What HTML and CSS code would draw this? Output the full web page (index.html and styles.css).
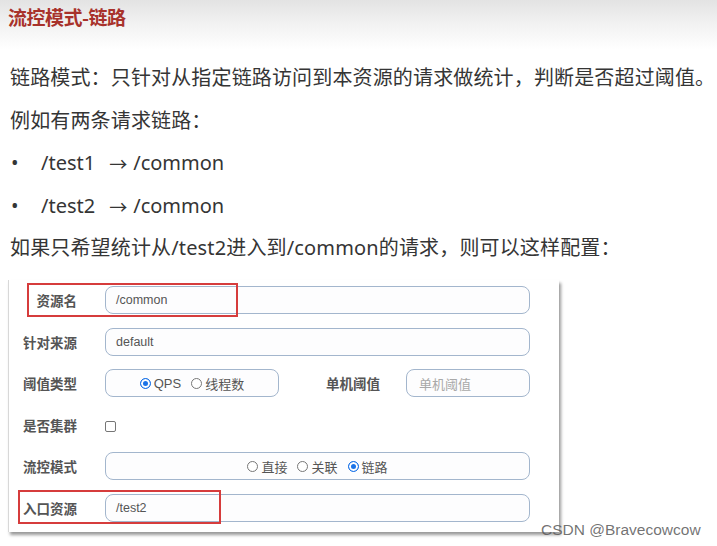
FILE: index.html
```html
<!DOCTYPE html>
<html lang="zh-CN">
<head>
<meta charset="utf-8">
<title>流控模式-链路</title>
<link rel="stylesheet" href="styles.css">
</head>
<body>
<header class="header">
  <h1 class="title">流控模式-链路</h1>
</header>
<main class="content">
  <p class="line">链路模式：只针对从指定链路访问到本资源的请求做统计，判断是否超过阈值。</p>
  <p class="line">例如有两条请求链路：</p>
  <p class="line bullet-line"><span class="bullet">•</span><span>/test1</span><span class="arrow">→</span><span>/common</span></p>
  <p class="line bullet-line"><span class="bullet">•</span><span>/test2</span><span class="arrow">→</span><span>/common</span></p>
  <p class="line">如果只希望统计从/test2进入到/common的请求，则可以这样配置：</p>

  <section class="card">
    <div class="row">
      <span class="label">资源名</span>
      <div class="input wide"><span class="value">/common</span></div>
      <span class="mark mark-1"></span>
    </div>
    <div class="row">
      <span class="label">针对来源</span>
      <div class="input wide"><span class="value">default</span></div>
    </div>
    <div class="row">
      <span class="label">阈值类型</span>
      <div class="input radios narrow">
        <span class="opt"><span class="radio on"></span>QPS</span>
        <span class="opt"><span class="radio"></span>线程数</span>
      </div>
      <span class="label label-2">单机阈值</span>
      <div class="input small"><span class="placeholder">单机阈值</span></div>
    </div>
    <div class="row">
      <span class="label">是否集群</span>
      <span class="checkbox"></span>
    </div>
    <div class="row">
      <span class="label">流控模式</span>
      <div class="input radios wide">
        <span class="opt"><span class="radio"></span>直接</span>
        <span class="opt"><span class="radio"></span>关联</span>
        <span class="opt"><span class="radio on"></span>链路</span>
      </div>
    </div>
    <div class="row">
      <span class="label">入口资源</span>
      <div class="input wide"><span class="value">/test2</span></div>
      <span class="mark mark-2"></span>
    </div>
  </section>
</main>
<div class="watermark">CSDN @Bravecowcow</div>
</body>
</html>
```

FILE: styles.css
```css
html, body {
  margin: 0;
  padding: 0;
  background: #ffffff;
}
body {
  width: 717px;
  height: 546px;
  position: relative;
  overflow: hidden;
  font-family: "Noto Sans", "Noto Sans CJK SC", sans-serif;
}
.header {
  height: 50px;
  background: linear-gradient(to bottom, #e3e3e3 0%, #f1f1f1 45%, #ffffff 100%);
}
.title {
  margin: 0;
  padding: 0 0 0 8px;
  height: 33px;
  font-family: "Noto Sans CJK SC", sans-serif;
  font-weight: 700;
  font-size: 19px;
  letter-spacing: -0.5px;
  line-height: 33px;
  color: #a8322b;
  white-space: nowrap;
}
.content {
  padding: 7px 0 0 10px;
}
.line {
  margin: 0;
  font-size: 20px;
  line-height: 42.5px;
  height: 42.5px;
  color: #353535;
  letter-spacing: 0.15px;
  white-space: nowrap;
  font-family: "Noto Sans", "Noto Sans CJK SC", sans-serif;
}
.bullet-line {
  display: flex;
  align-items: center;
  letter-spacing: 0;
}
.bullet {
  width: 30px;
  padding-left: 1px;
  font-size: 20px;
}
.arrow {
  font-family: "Noto Sans CJK SC", sans-serif;
  margin: 0 6px 0 14px;
  font-size: 18px;
}
.card {
  margin: 10.5px 0 0 -2px;
  width: 522px;
  padding: 6px 28px 10.5px 0;
  background: #ffffff;
  border-left: 1px solid #d8d8d8;
  box-shadow: 2px 3px 3px rgba(0, 0, 0, 0.4);
  display: flex;
  flex-direction: column;
  gap: 13.5px;
  font-family: "Liberation Sans", "Noto Sans CJK SC", sans-serif;
}
.row {
  position: relative;
  display: flex;
  align-items: center;
  height: 28px;
}
.label {
  width: 68px;
  flex: none;
  text-align: right;
  font-weight: 700;
  font-size: 13.5px;
  color: #555555;
  margin-right: 28px;
  font-family: "Noto Sans CJK SC", sans-serif;
}
.label-2 {
  width: 101px;
  margin-right: 26px;
}
.input {
  box-sizing: border-box;
  height: 28px;
  border: 1px solid #a3b6cd;
  border-radius: 8px;
  background: #fdfdfe;
  display: flex;
  align-items: center;
  padding-left: 10px;
  font-size: 12.5px;
  color: #555555;
}
.wide { width: 425px; }
.narrow { width: 174px; }
.small { width: 124px; padding-left: 12px; }
.placeholder {
  color: #a9a9a9;
  font-size: 13px;
  font-family: "Noto Sans CJK SC", sans-serif;
}
.radios {
  justify-content: center;
  padding-left: 0;
  gap: 10px;
}
.opt {
  display: flex;
  align-items: center;
  gap: 3px;
  font-size: 13px;
  color: #555555;
  font-family: "Liberation Sans", "Noto Sans CJK SC", sans-serif;
}
.radio {
  box-sizing: border-box;
  width: 11px;
  height: 11px;
  border-radius: 50%;
  border: 1px solid #777777;
  background: #ffffff;
}
.radio.on {
  border-color: #1a73e8;
  background: #1a73e8;
  box-shadow: inset 0 0 0 2px #ffffff;
}
.checkbox {
  box-sizing: border-box;
  width: 11px;
  height: 11px;
  border: 1px solid #767676;
  border-radius: 2px;
  background: #ffffff;
  margin-top: 4px;
}
.mark {
  position: absolute;
  border: 2px solid #d63c3c;
  box-sizing: border-box;
  pointer-events: none;
}
.mark-1 {
  left: 18px;
  top: -3px;
  width: 211px;
  height: 34px;
}
.mark-2 {
  left: 9px;
  top: -3.5px;
  width: 203px;
  height: 34px;
}
.watermark {
  position: absolute;
  left: 541px;
  top: 519px;
  font-family: "Liberation Sans", sans-serif;
  font-size: 15.5px;
  line-height: 22px;
  color: rgba(90, 90, 90, 0.85);
  white-space: nowrap;
}
```
